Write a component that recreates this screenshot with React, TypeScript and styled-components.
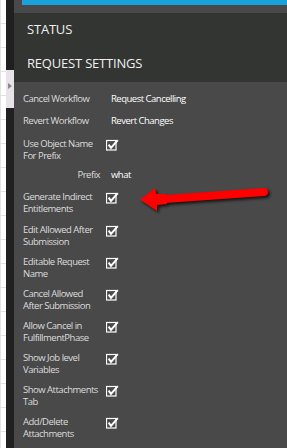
import React from 'react';
import styled, { createGlobalStyle } from 'styled-components';

const GlobalStyle = createGlobalStyle`
  html, body {
    margin: 0;
    padding: 0;
    background: #ffffff;
  }
  body {
    font-family: 'Open Sans', 'DejaVu Sans', sans-serif;
  }
`;

const Page = styled.div`
  display: flex;
  width: 287px;
  height: 448px;
  overflow: hidden;
`;

const Gutter = styled.div`
  width: 6px;
  flex: none;
  background: repeating-linear-gradient(
    to bottom,
    #ffffff 0,
    #ffffff 23px,
    #e2e2e2 23px,
    #e2e2e2 24px
  );
  border-left: 1px solid #e4e4e4;
  box-sizing: border-box;
`;

const Rail = styled.div`
  width: 8px;
  flex: none;
  background: #202020;
  display: flex;
  flex-direction: column;
`;

const Handle = styled.div`
  margin-top: 70px;
  height: 38px;
  flex: none;
  background: #e7e3e8;
  display: flex;
  align-items: center;
  justify-content: center;
  padding-bottom: 6px;
  box-sizing: border-box;
`;

const HandleArrow = styled.div`
  width: 0;
  height: 0;
  border-top: 3px solid transparent;
  border-bottom: 3px solid transparent;
  border-left: 4px solid #8a8a8a;
`;

const Panel = styled.div`
  flex: 1;
  position: relative;
  background: #494949;
  display: flex;
  flex-direction: column;
  overflow: hidden;
`;

const TopStrip = styled.div`
  flex: none;
  height: 5px;
  padding-left: 8px;
  margin-bottom: 8px;
`;

const BlueBar = styled.div`
  height: 100%;
  background: #18a3de;
`;

const Header = styled.div`
  flex: none;
  background: #333533;
  height: 69px;
  display: flex;
  flex-direction: column;
`;

const HeaderItem = styled.div<{ $offset?: number }>`
  flex: 1;
  display: flex;
  align-items: center;
  padding-left: 13px;
  padding-bottom: ${(p) => p.$offset ?? 0}px;
  color: #f0f0f0;
  font-size: 13px;
  letter-spacing: -0.2px;
`;

const Form = styled.div`
  flex: none;
  display: flex;
  flex-direction: column;
  padding: 11px 0 0 9px;
`;

const Row = styled.div<{ $space?: number }>`
  flex: none;
  display: grid;
  grid-template-columns: 78px 1fr;
  column-gap: 5px;
  align-items: start;
  margin-bottom: ${(p) => p.$space ?? 8}px;
`;

const Label = styled.div<{ $right?: boolean }>`
  font-size: 9.5px;
  line-height: 12px;
  color: #dcdcdc;
  letter-spacing: -0.5px;
  white-space: nowrap;
  text-align: ${(p) => (p.$right ? 'right' : 'left')};
  padding-right: ${(p) => (p.$right ? 1 : 0)}px;
`;

const Value = styled.div`
  font-size: 9.5px;
  line-height: 12px;
  color: #ffffff;
  padding-left: 5px;
  letter-spacing: -0.5px;
`;

const CheckWrap = styled.div`
  padding-top: 1px;
  line-height: 0;
`;

const ArrowLayer = styled.svg`
  position: absolute;
  left: 120px;
  top: 178px;
  filter: drop-shadow(2px 2px 1.5px rgba(0, 0, 0, 0.75));
`;

const Check = () => (
  <CheckWrap>
    <svg width="13" height="12" viewBox="0 0 13 12">
      <rect x="0.5" y="1.5" width="9.5" height="9.5" fill="none" stroke="#fff" strokeWidth="1.2" />
      <path d="M2.6 5.6 L5 8.8 L11.8 1.2" fill="none" stroke="#fff" strokeWidth="2" />
    </svg>
  </CheckWrap>
);

const checks = [
  ['Edit Allowed After', 'Submission'],
  ['Editable Request', 'Name'],
  ['Cancel Allowed', 'After Submission'],
  ['Allow Cancel in', 'FulfillmentPhase'],
  ['Show Job level', 'Variables'],
  ['Show Attachments', 'Tab'],
  ['Add/Delete', 'Attachments'],
];

const App: React.FunctionComponent = () => (
  <>
    <GlobalStyle />
    <Page>
      <Gutter />
      <Rail>
        <Handle>
          <HandleArrow />
        </Handle>
      </Rail>
      <Panel>
        <TopStrip>
          <BlueBar />
        </TopStrip>
        <Header>
          <HeaderItem $offset={2}>STATUS</HeaderItem>
          <HeaderItem $offset={3}>REQUEST SETTINGS</HeaderItem>
        </Header>
        <Form>
          <Row $space={10}>
            <Label>Cancel Workflow</Label>
            <Value>Request Cancelling</Value>
          </Row>
          <Row $space={11}>
            <Label>Revert Workflow</Label>
            <Value>Revert Changes</Value>
          </Row>
          <Row $space={7}>
            <Label>
              Use Object Name
              <br />
              For Prefix
            </Label>
            <Check />
          </Row>
          <Row $space={10}>
            <Label $right>Prefix</Label>
            <Value>what</Value>
          </Row>
          <Row $space={9}>
            <Label>
              Generate Indirect
              <br />
              Entitlements
            </Label>
            <Check />
          </Row>
          {checks.map(([a, b]) => (
            <Row key={a}>
              <Label>
                {a}
                <br />
                {b}
              </Label>
              <Check />
            </Row>
          ))}
        </Form>
        <ArrowLayer width="150" height="34" viewBox="0 0 150 34">
          <path d="M31 21 L130 14" stroke="#ff0000" strokeWidth="8" strokeLinecap="round" fill="none" />
          <path d="M6 21.5 L21 10 L22 16 L32 16 L33 26 L23 27 L23 33 Z" fill="#ff0000" />
        </ArrowLayer>
      </Panel>
    </Page>
  </>
);

export default App;
